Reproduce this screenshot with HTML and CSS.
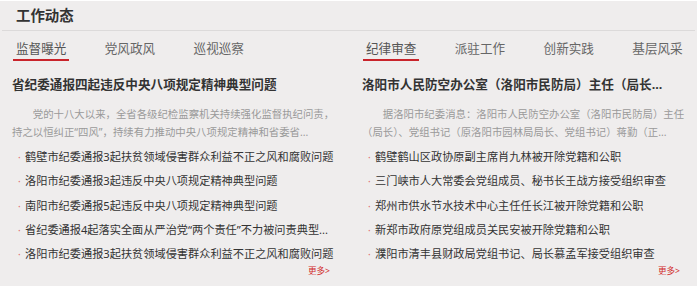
FILE: index.html
```html
<!DOCTYPE html>
<html lang="zh-CN">
<head>
<meta charset="utf-8">
<title>工作动态</title>
<link rel="stylesheet" href="styles.css">
</head>
<body>
<div class="panel">
  <div class="head"><h2 class="head-title">工作动态</h2></div>
  <div class="cols">
    <section class="col">
      <ul class="tabs">
        <li class="tab active">监督曝光</li>
        <li class="tab">党风政风</li>
        <li class="tab">巡视巡察</li>
      </ul>
      <h3 class="title">省纪委通报四起违反中央八项规定精神典型问题</h3>
      <p class="summary"><span class="line indent">党的十八大以来，全省各级纪检监察机关持续强化监督执纪问责，</span><span class="line">持之以恒纠正“四风”，持续有力推动中央八项规定精神和省委省...</span></p>
      <ul class="list">
        <li class="item">鹤壁市纪委通报3起扶贫领域侵害群众利益不正之风和腐败问题</li>
        <li class="item">洛阳市纪委通报3起违反中央八项规定精神典型问题</li>
        <li class="item">南阳市纪委通报5起违反中央八项规定精神典型问题</li>
        <li class="item">省纪委通报4起落实全面从严治党“两个责任”不力被问责典型...</li>
        <li class="item">洛阳市纪委通报3起扶贫领域侵害群众利益不正之风和腐败问题</li>
      </ul>
      <div class="more-row"><a class="more">更多&gt;</a></div>
    </section>
    <section class="col">
      <ul class="tabs">
        <li class="tab active">纪律审查</li>
        <li class="tab">派驻工作</li>
        <li class="tab">创新实践</li>
        <li class="tab">基层风采</li>
      </ul>
      <h3 class="title">洛阳市人民防空办公室（洛阳市民防局）主任（局长...</h3>
      <p class="summary"><span class="line indent">据洛阳市纪委消息：洛阳市人民防空办公室（洛阳市民防局）主任</span><span class="line">（局长）、党组书记（原洛阳市园林局局长、党组书记）蒋勤（正...</span></p>
      <ul class="list">
        <li class="item">鹤壁鹤山区政协原副主席肖九林被开除党籍和公职</li>
        <li class="item">三门峡市人大常委会党组成员、秘书长王战方接受组织审查</li>
        <li class="item">郑州市供水节水技术中心主任任长江被开除党籍和公职</li>
        <li class="item">新郑市政府原党组成员关民安被开除党籍和公职</li>
        <li class="item">濮阳市清丰县财政局党组书记、局长慕孟军接受组织审查</li>
      </ul>
      <div class="more-row"><a class="more">更多&gt;</a></div>
    </section>
  </div>
</div>
</body>
</html>
```

FILE: styles.css
```css
* { box-sizing: border-box; }
html, body { margin: 0; padding: 0; background: #fff; }
body { font-family: "Noto Sans", "Noto Sans CJK SC", sans-serif; }

.panel {
  margin-top: 1px;
  width: 697px;
  height: 285px;
  background: #efeded;
  overflow: hidden;
}

.head {
  margin: 0 2px;
  height: 30px;
  border-bottom: 1px solid #dcdada;
}
.head-title {
  margin: 0;
  padding-left: 14px;
  font-size: 14.4px;
  line-height: 29px;
  font-weight: bold;
  color: #333;
}

.cols {
  display: flex;
  gap: 26px;
  padding-left: 12px;
}
.col {
  width: 324px;
  flex: none;
  display: flex;
  flex-direction: column;
}

.tabs {
  list-style: none;
  margin: 8px 0 0 1px;
  padding: 0;
  display: flex;
  gap: 32.4px;
}
.tab {
  flex: none;
  padding: 0 3px;
  font-size: 12.6px;
  line-height: 20px;
  color: #666;
  border-bottom: 2px solid transparent;
  white-space: nowrap;
}
.tab.active {
  color: #555;
  border-bottom-color: #c9242b;
}

.title {
  margin: 14px 0 0;
  font-size: 12.6px;
  line-height: 20px;
  font-weight: bold;
  color: #333;
  white-space: nowrap;
}

.summary {
  margin: 10px 0 0;
  font-size: 10.4px;
  line-height: 18px;
  color: #9a9a9a;
}
.line {
  display: block;
  white-space: nowrap;
}
.indent { text-indent: 2em; }

.list {
  list-style: none;
  margin: 4px 0 0;
  padding: 0;
}
.item {
  position: relative;
  padding-left: 13px;
  font-size: 11.2px;
  line-height: 24.25px;
  color: #333;
  white-space: nowrap;
}
.item::before {
  content: "·";
  position: absolute;
  left: 6px;
  top: 0;
  color: #e07070;
  font-size: 10px;
}

.more-row {
  display: flex;
  justify-content: flex-end;
  padding-right: 6px;
}
.more {
  font-size: 8.6px;
  line-height: 10px;
  color: #d12a2a;
  text-decoration: none;
}
```
